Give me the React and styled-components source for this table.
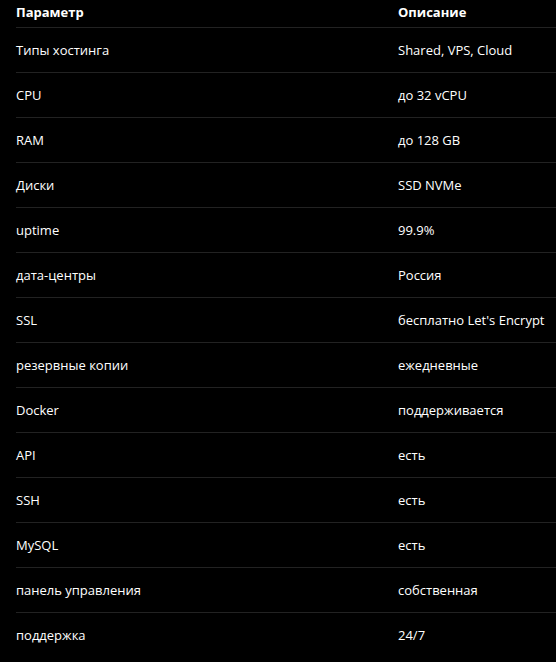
import React from "react";
import styled, { createGlobalStyle } from "styled-components";

const GlobalStyle = createGlobalStyle`
  html, body {
    margin: 0;
    padding: 0;
    background: #000;
  }
  body {
    font-family: "Open Sans", "Noto Sans", sans-serif;
    color: #fff;
    overflow: hidden;
  }
`;

const rows = [
  ["Типы хостинга", "Shared, VPS, Cloud"],
  ["CPU", "до 32 vCPU"],
  ["RAM", "до 128 GB"],
  ["Диски", "SSD NVMe"],
  ["uptime", "99.9%"],
  ["дата-центры", "Россия"],
  ["SSL", "бесплатно Let's Encrypt"],
  ["резервные копии", "ежедневные"],
  ["Docker", "поддерживается"],
  ["API", "есть"],
  ["SSH", "есть"],
  ["MySQL", "есть"],
  ["панель управления", "собственная"],
  ["поддержка", "24/7"],
];

const Page = styled.div`
  width: 556px;
  height: 662px;
  padding-left: 16px;
  box-sizing: border-box;
  overflow: hidden;
`;

const Table = styled.div`
  display: flex;
  flex-direction: column;
  width: 600px;
`;

const Row = styled.div`
  display: grid;
  grid-template-columns: 382px 1fr;
  align-items: center;
  box-sizing: border-box;
  height: ${(p) => (p.$head ? "28px" : "45px")};
  padding-bottom: ${(p) => (p.$head ? "4px" : "0")};
  border-bottom: 1px solid ${(p) => (p.$last ? "transparent" : "#222")};
`;

const Cell = styled.div`
  font-size: 13px;
  line-height: 18px;
  font-weight: ${(p) => (p.$head ? 700 : 400)};
  color: #fff;
  white-space: nowrap;
`;

export default function App() {
  return (
    <>
      <GlobalStyle />
      <Page>
        <Table>
          <Row $head>
            <Cell $head>Параметр</Cell>
            <Cell $head>Описание</Cell>
          </Row>
          {rows.map(([name, desc], i) => (
            <Row key={name} $last={i === rows.length - 1}>
              <Cell>{name}</Cell>
              <Cell>{desc}</Cell>
            </Row>
          ))}
        </Table>
      </Page>
    </>
  );
}
